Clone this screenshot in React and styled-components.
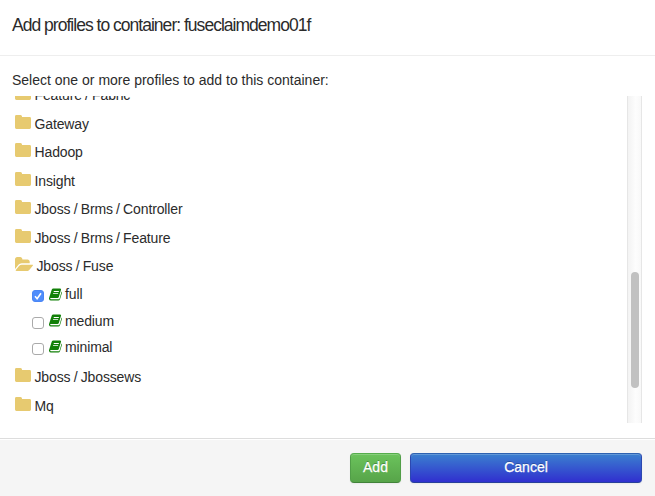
import React from "react";
import styled, { createGlobalStyle } from "styled-components";

const GlobalStyle = createGlobalStyle`
  * { box-sizing: border-box; }
  body {
    margin: 0;
    background: #fff;
    color: #2b2b2b;
    font: 14px/20px "Liberation Sans", Arial, sans-serif;
  }
  button { font-family: inherit; }
`;

const Dialog = styled.section`
  display: flex;
  flex-direction: column;
  width: 655px;
  height: 496px;
  overflow: hidden;
`;

const Header = styled.header`
  height: 56px;
  padding: 10px 12px 0;
  border-bottom: 1px solid #eee;
`;

const Title = styled.h4`
  margin: 0;
  font-size: 17.5px;
  line-height: 30px;
  font-weight: normal;
  letter-spacing: -0.98px;
  white-space: nowrap;
`;

const Body = styled.main`
  flex: 1;
  padding: 14px 13px 0 12px;
`;

const Prompt = styled.p`
  margin: 0 0 6px;
`;

const ListPane = styled.div`
  display: flex;
  height: 327px;
  overflow: hidden;
`;

const Tree = styled.ul`
  flex: 1;
  list-style: none;
  margin: -15px 0 0;
  padding: 0 0 0 3px;
  letter-spacing: -0.13px;
  word-spacing: -0.5px;
`;

const FolderLabel = styled.div`
  display: flex;
  align-items: center;
  gap: 3.5px;
  height: 28.5px;

  svg { margin-top: -4px; }
`;

const Profiles = styled.ul`
  list-style: none;
  margin: 0;
  padding: 0.5px 0 2.8px 17px;
`;

const Profile = styled.li`
  display: flex;
  align-items: center;
  height: 26.4px;
`;

const Checkbox = styled.input`
  appearance: none;
  width: 12px;
  height: 12px;
  margin: 4px 5px 0 0;
  border: 1px solid #aaa;
  border-radius: 3px;
  background: #fff;

  &:checked {
    border-color: #4a86f5;
    background: #4f8dfb url("data:image/svg+xml,%3Csvg xmlns='http://www.w3.org/2000/svg' viewBox='0 0 10 10'%3E%3Cpath d='M2 5.3 4.1 7.7 8 2.2' fill='none' stroke='white' stroke-width='1.6'/%3E%3C/svg%3E") center / 10px 10px no-repeat;
  }
`;

const Icon = styled.svg`
  flex: none;
  display: block;
  fill: ${({ $color }) => $color};
`;

const ProfileName = styled.span`
  margin-left: 3px;
`;

const Track = styled.div`
  width: 15px;
  height: 327px;
  padding: 176px 3px 0 4px;
  border: solid #e6e6e6;
  border-width: 0 1px;
  background: linear-gradient(to right, #f3f3f3, #fdfdfd 60%, #f8f8f8);
`;

const Thumb = styled.div`
  height: 116px;
  width: 8px;
  margin-left: -1px;
  border-radius: 4px;
  background: #c1c1c1;
`;

const Footer = styled.footer`
  display: flex;
  gap: 9px;
  height: 58px;
  padding: 14px 13px 0 350px;
  border-top: 1px solid #ddd;
  background: #f5f5f5;
  box-shadow: inset 0 1px 0 #fff;
`;

const Button = styled.button`
  width: ${({ $width }) => $width}px;
  height: 30px;
  padding: 0 0 2px;
  border: 1px solid;
  border-color: ${({ $primary }) => ($primary ? "#55ad4c #519e48 #41833a" : "#2e62b1 #2c48b0 #27409a")};
  border-radius: 4px;
  background: ${({ $primary }) =>
    $primary ? "linear-gradient(#6bc35c, #57a449)" : "linear-gradient(#3b80cf, #302fcf)"};
  box-shadow: inset 0 1px 0 rgba(255, 255, 255, 0.2), 0 1px 2px rgba(0, 0, 0, 0.05);
  color: #fff;
  font-size: 14px;
  line-height: 20px;
  text-shadow: 0 -1px 0 rgba(0, 0, 0, 0.25);
  -webkit-text-stroke: 0.25px #fff;
`;

const FolderIcon = () => (
  <Icon $color="#e7ca70" width="16" height="14" viewBox="0 0 16 14">
    <path d="M1.4 0H5.5Q7 0 7 1.5V2H14.6Q16 2 16 3.4V12.6Q16 14 14.6 14H1.4Q0 14 0 12.6V1.4Q0 0 1.4 0Z" />
  </Icon>
);

const FolderOpenIcon = () => (
  <Icon $color="#e7ca70" width="18" height="14" viewBox="64 128 1879 1408" preserveAspectRatio="none">
    <path d="M1943 952q0 31-31 66l-336 396q-43 51-120.500 86.500t-143.500 35.500h-1088q-34 0-60.500-13t-26.500-43q0-31 31-66l336-396q43-51 120.500-86.500t143.500-35.500h1088q34 0 60.500 13t26.500 43zm-343-344v160h-832q-94 0-197 47.500t-164 119.500l-337 396-5 6q0-4-.5-12.500t-.5-12.500v-960q0-92 66-158t158-66h320q92 0 158 66t66 158v32h544q92 0 158 66t66 158z" />
  </Icon>
);

const BookIcon = () => (
  <Icon $color="#128008" width="13" height="13" viewBox="0 0 13 13">
    <path d="M4.3 0.5H11Q12.3 0.6 12 1.8L9.8 9Q9.5 10 8.5 10H1.6Q1 10.2 1.3 10.8Q1.6 11.3 2.4 11.3H9.4Q10.3 11.3 10.6 10.4L12.6 3.4Q13.2 3.9 12.9 4.9L11 11.2Q10.5 12.5 9.3 12.5H2Q0.5 12.4 0 10.9Q-0.1 10.3 0.2 9.5L2.8 1.6Q3.2 0.5 4.3 0.5ZM4.9 3L4.6 3.9H9.7L10 3ZM4.2 5.2L3.9 6.1H9L9.3 5.2Z" fillRule="evenodd" />
  </Icon>
);

const folders = [
  { name: "Feature / Fabric" },
  { name: "Gateway" },
  { name: "Hadoop" },
  { name: "Insight" },
  { name: "Jboss / Brms / Controller" },
  { name: "Jboss / Brms / Feature" },
  {
    name: "Jboss / Fuse",
    profiles: [
      { name: "full", selected: true },
      { name: "medium" },
      { name: "minimal" },
    ],
  },
  { name: "Jboss / Jbossews" },
  { name: "Mq" },
];

export default function App() {
  return (
    <>
      <GlobalStyle />
      <Dialog>
        <Header>
          <Title>Add profiles to container: fuseclaimdemo01f</Title>
        </Header>
        <Body>
          <Prompt>Select one or more profiles to add to this container:</Prompt>
          <ListPane>
            <Tree>
              {folders.map(({ name, profiles }) => (
                <li key={name}>
                  <FolderLabel>
                    {profiles ? <FolderOpenIcon /> : <FolderIcon />}
                    <span>{name}</span>
                  </FolderLabel>
                  {profiles && (
                    <Profiles>
                      {profiles.map((p) => (
                        <Profile key={p.name}>
                          <Checkbox type="checkbox" defaultChecked={p.selected} />
                          <BookIcon />
                          <ProfileName>{p.name}</ProfileName>
                        </Profile>
                      ))}
                    </Profiles>
                  )}
                </li>
              ))}
            </Tree>
            <Track>
              <Thumb />
            </Track>
          </ListPane>
        </Body>
        <Footer>
          <Button $primary $width={51}>Add</Button>
          <Button $width={232}>Cancel</Button>
        </Footer>
      </Dialog>
    </>
  );
}
